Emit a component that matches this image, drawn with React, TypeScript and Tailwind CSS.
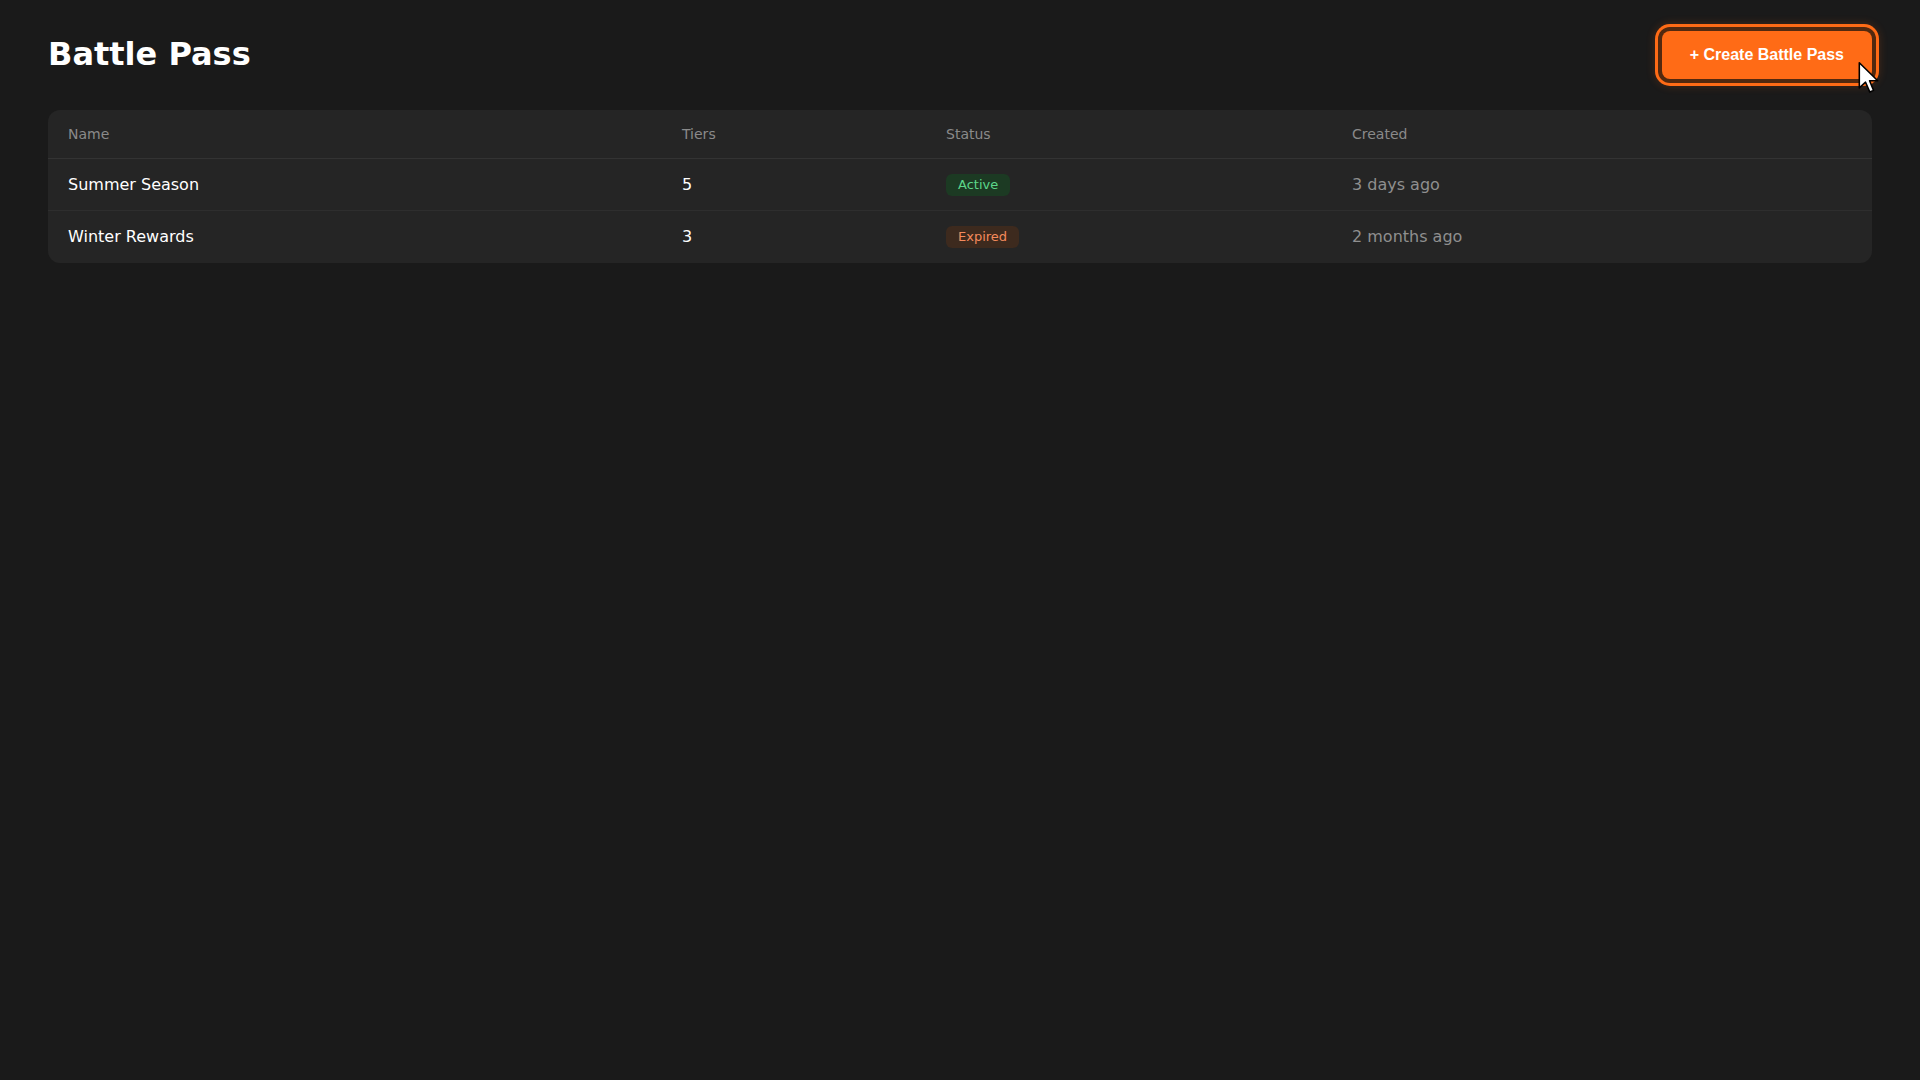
import React from 'react'

type Pass = {
  name: string
  tiers: number
  status: 'Active' | 'Expired'
  created: string
}

const passes: Pass[] = [
  { name: 'Summer Season', tiers: 5, status: 'Active', created: '3 days ago' },
  { name: 'Winter Rewards', tiers: 3, status: 'Expired', created: '2 months ago' },
]

const cols = 'grid grid-cols-[614px_264px_406px_1fr]'

function StatusBadge({ status }: { status: Pass['status'] }) {
  const tone =
    status === 'Active'
      ? 'bg-[#1c3a23] text-[#5cd68a]'
      : 'bg-[#3d2a1e] text-[#f48a5c]'
  return (
    <span className={`inline-block rounded-md px-3 py-0.5 text-[13px] leading-[18px] ${tone}`}>
      {status}
    </span>
  )
}

// screenshot pointer over the button
function Cursor() {
  return (
    <svg
      className="absolute left-[194px] top-[30px] pointer-events-none"
      width="24"
      height="33"
      viewBox="0 0 12 19"
    >
      <path
        d="M1 1 L1 15.5 L4.6 12.2 L7 17.8 L9.2 16.9 L6.9 11.4 L11.6 11.4 Z"
        fill="#ffffff"
        stroke="#000000"
        strokeWidth="0.9"
        strokeLinejoin="round"
      />
    </svg>
  )
}

export default function App() {
  return (
    <div
      className="min-h-screen bg-[#1a1a1a] px-12 pt-8 text-white"
      style={{ fontFamily: '"DejaVu Sans", sans-serif' }}
    >
      {/* Header */}
      <div className="flex items-center justify-between mb-[30px]">
        <h1 className="pb-1 text-[32px] font-bold leading-[44px]">Battle Pass</h1>
        <div className="relative -mt-0.5">
          <button
            type="button"
            className="rounded-lg bg-[#ff6b16] px-7 py-3 text-base font-bold leading-6 text-white shadow-[0_0_0_4px_#52290f,0_0_0_7px_#ff6b16,0_0_10px_7px_rgba(255,107,22,0.2)]"
            style={{ fontFamily: '"Liberation Sans", Arial, sans-serif' }}
          >
            + Create Battle Pass
          </button>
          <Cursor />
        </div>
      </div>

      {/* Table */}
      <div className="rounded-xl bg-[#252525] overflow-hidden">
        <div className={`${cols} h-[49px] items-center border-b border-[#333333] text-sm text-[#8a8a8a]`}>
          <div className="px-5">Name</div>
          <div className="px-5">Tiers</div>
          <div className="px-5">Status</div>
          <div className="px-5">Created</div>
        </div>
        {passes.map((p, i) => (
          <div
            key={p.name}
            className={`${cols} h-[52px] items-center text-base ${
              i < passes.length - 1 ? 'border-b border-[#2e2e2e]' : ''
            }`}
          >
            <div className="px-5 text-white">{p.name}</div>
            <div className="px-5 text-white">{p.tiers}</div>
            <div className="flex items-center px-5">
              <StatusBadge status={p.status} />
            </div>
            <div className="px-5 text-[#8f8f8f]">{p.created}</div>
          </div>
        ))}
      </div>
    </div>
  )
}
